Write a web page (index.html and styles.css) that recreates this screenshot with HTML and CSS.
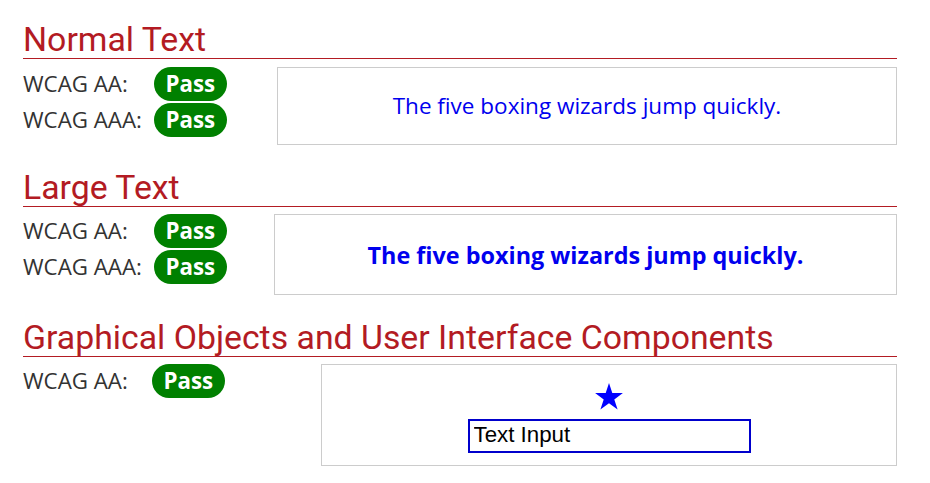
FILE: index.html
```html
<!DOCTYPE html>
<html>
<head>
<meta charset="utf-8">
<link rel="stylesheet" href="styles.css">
</head>
<body>
<div class="page">
  <section class="section">
    <h2 class="heading">Normal Text</h2>
    <div class="row">
      <div class="results">
        <span class="label">WCAG AA:</span><span class="badge">Pass</span>
        <span class="label">WCAG AAA:</span><span class="badge">Pass</span>
      </div>
      <div class="sample sample-normal">The five boxing wizards jump quickly.</div>
    </div>
  </section>
  <section class="section">
    <h2 class="heading">Large Text</h2>
    <div class="row">
      <div class="results">
        <span class="label">WCAG AA:</span><span class="badge">Pass</span>
        <span class="label">WCAG AAA:</span><span class="badge">Pass</span>
      </div>
      <div class="sample sample-large">The five boxing wizards jump quickly.</div>
    </div>
  </section>
  <section class="section">
    <h2 class="heading">Graphical Objects and User Interface Components</h2>
    <div class="row">
      <div class="results results-ui">
        <span class="label">WCAG AA:</span><span class="badge">Pass</span>
      </div>
      <div class="sample sample-ui">
        <svg class="star" width="28" height="27" viewBox="0 0 28 27"><polygon points="14,0 17.3,10.1 27.9,10.1 19.3,16.4 22.6,26.6 14,20.3 5.4,26.6 8.7,16.4 0.1,10.1 10.7,10.1" fill="#0000ff"/></svg>
        <input class="text-input" type="text" value="Text Input">
      </div>
    </div>
  </section>
</div>
</body>
</html>
```

FILE: styles.css
```css
html, body {
  margin: 0;
  padding: 0;
  background: #ffffff;
}
.page {
  padding: 22px 33px 0 23px;
}
.section + .section {
  margin-top: 25px;
}
.heading {
  margin: 0;
  font-family: Roboto, "Liberation Sans", sans-serif;
  font-weight: 400;
  font-size: 33.8px;
  line-height: 36px;
  color: #b31b23;
  border-bottom: 1px solid #b31b23;
}
.row {
  display: flex;
  align-items: flex-start;
  margin-top: 8px;
}
.section + .section .row {
  margin-top: 7px;
}
.results {
  display: grid;
  grid-template-columns: 131px auto;
  row-gap: 2px;
  align-items: center;
  width: 254px;
}
.results-ui {
  grid-template-columns: 129px auto;
  width: 298px;
}
.label {
  font-family: "Open Sans", sans-serif;
  font-size: 22.3px;
  line-height: 30px;
  color: #333333;
}
.badge {
  justify-self: start;
  font-family: "Open Sans", sans-serif;
  font-weight: 700;
  font-size: 22.3px;
  line-height: 34px;
  height: 34px;
  padding: 0 11.5px;
  border-radius: 17px;
  background: #008000;
  color: #ffffff;
}
.sample {
  flex: 1;
  border: 1px solid #cccccc;
  text-align: center;
  color: #0000ee;
  font-family: "Open Sans", sans-serif;
}
.sample-normal {
  font-size: 22.5px;
  line-height: 28px;
  padding: 24px 0;
}
.sample-large {
  font-size: 23.4px;
  font-weight: 700;
  line-height: 28px;
  padding: 26px 0 25px;
}
.results + .sample-large {
  margin-left: -3px;
}
.sample-ui {
  display: flex;
  flex-direction: column;
  align-items: center;
  padding: 18px 0 12px;
}
.star {
  display: block;
  margin-bottom: 9px;
}
.text-input {
  width: 283px;
  height: 34px;
  box-sizing: border-box;
  border: 2px solid #0000cc;
  padding: 0 0 2px 4px;
  margin: 0;
  font-family: "Liberation Sans", Arial, sans-serif;
  font-size: 22.3px;
  color: #000000;
  background: #ffffff;
  outline: none;
}
```
